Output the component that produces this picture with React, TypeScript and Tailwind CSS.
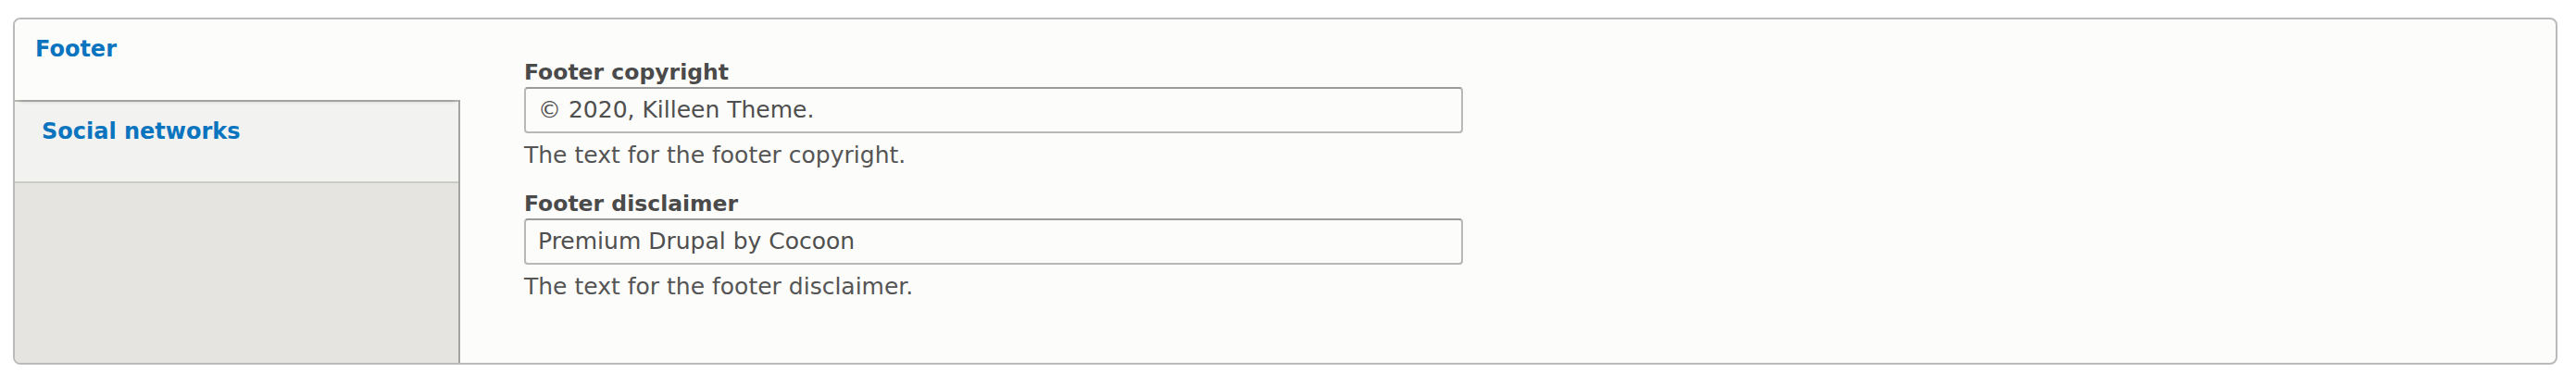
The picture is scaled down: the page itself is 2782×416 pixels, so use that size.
import React from "react";

const font = { fontFamily: '"DejaVu Sans", "Liberation Sans", sans-serif' };

function Field({ label, value, desc }: { label: string; value: string; desc: string }) {
  return (
    <div className="flex flex-col mb-[22px]">
      <label className="block text-[23.5px] leading-[30px] font-bold text-[#4a4a4a]">{label}</label>
      <div className="mt-[1px] w-[1014px] h-[50px] rounded-[4px] border-2 border-[#b8b8b8] border-t-[#9a9a9a] bg-[#fcfcfa] flex items-center pl-[13px] text-[25px] text-[#4f4f4f]">
        {value}
      </div>
      <div className="mt-[9px] text-[25px] leading-[30px] text-[#555555]">{desc}</div>
    </div>
  );
}

export default function App() {
  return (
    <div className="w-[2782px] h-[416px] bg-white pt-[19px] pl-[14px] pr-[20px]" style={font}>
      <div className="flex border-2 border-[#bababa] rounded-[8px] bg-[#fcfcfa] overflow-hidden">
        <ul className="w-[481px] shrink-0 flex flex-col bg-[#e5e4e0] border-r-2 border-[#a3a3a3]">
          <li className="relative z-10 -mr-[2px] bg-[#fcfcfa] pt-[17px] pb-[40px] pl-[22px] text-[24px] leading-[30px] font-bold text-[#0a74bf] shadow-[0_5px_5px_-5px_rgba(0,0,0,0.35)]">
            Footer
          </li>
          <li className="bg-[#f2f2f0] border-t-2 border-b-2 border-t-[#b9b9b4] border-b-[#cacac6] pt-[17px] pb-[39px] pl-[29px] text-[24px] leading-[30px] font-bold text-[#0a74bf]">
            Social networks
          </li>
        </ul>
        <div className="flex-1 pl-[69px] pt-[42px] pb-[45px]">
          <Field label="Footer copyright" value="© 2020, Killeen Theme." desc="The text for the footer copyright." />
          <Field label="Footer disclaimer" value="Premium Drupal by Cocoon" desc="The text for the footer disclaimer." />
        </div>
      </div>
    </div>
  );
}
